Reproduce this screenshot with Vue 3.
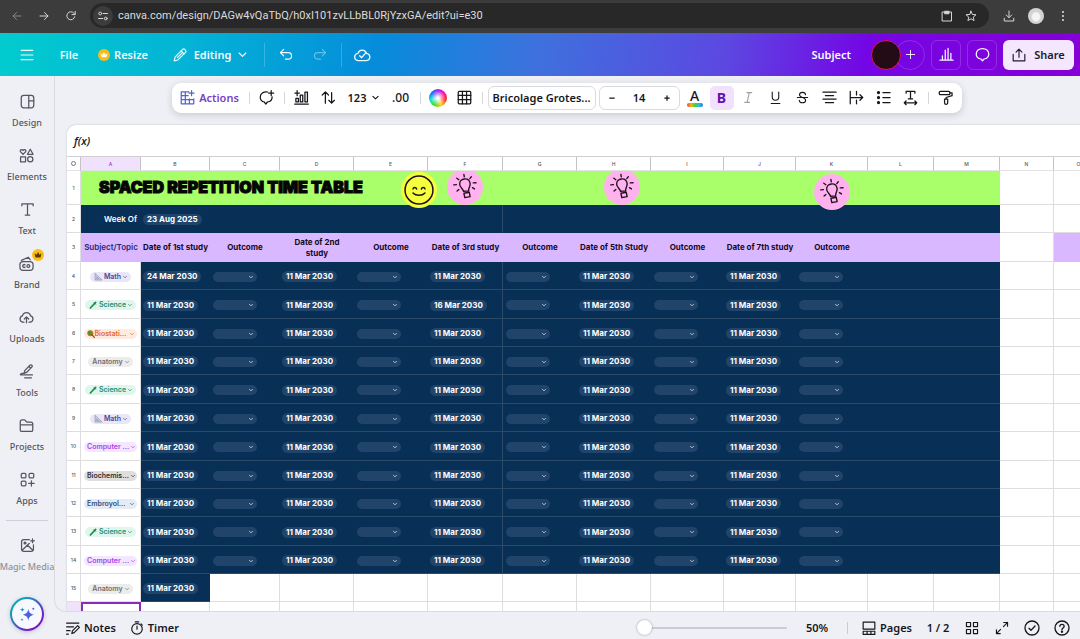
<script setup>
import { h, ref } from 'vue'

const icons = {
  back: '<path d="M20 12H4M11 5l-7 7 7 7"/>',
  forward: '<path d="M4 12h16M13 5l7 7-7 7"/>',
  reload: '<path d="M19.5 13.5A8 8 0 1 1 17.8 6.4L20 8.6"/><path d="M20.4 2.8v6.4H14"/>',
  tune: '<circle cx="6.5" cy="7" r="2.8"/><path d="M12.5 7H21M3 17h8.5"/><circle cx="17.5" cy="17" r="2.8"/>',
  clipboard: '<path d="M3 4h18v18H3z"/><path d="M8 2.500h8v5H8z" fill="currentColor"/>',
  star: '<path d="M12 2.300l2.800 6.600 7.200.6-5.500 4.700 1.700 7L12 17.500l-6.200 3.700 1.700-7L2 9.500l7.200-.6z"/>',
  download: '<path d="M12 2v13M6.500 10l5.500 5.500 5.500-5.500M2.500 16.500V22h19v-5.500"/>',
  dots: '<g fill="currentColor" stroke="none"><circle cx="12" cy="4" r="2.200"/><circle cx="12" cy="12" r="2.200"/><circle cx="12" cy="20" r="2.200"/></g>',
  menu: '<path d="M2 4h20M2 12h20M2 20h20"/>',
  crownCoin: '<circle cx="12" cy="12" r="12" fill="#fdbc15" stroke="none"/><path d="M5.500 8.500l3.500 3 3-5 3 5 3.500-3-1.500 8H7z" fill="#fff" stroke="none"/>',
  crownDark: '<circle cx="12" cy="12" r="12" fill="#fdbc15" stroke="none"/><path d="M5 8.500l4 3 3-5.500 3 5.500 4-3-2 8.500H7z" fill="#5b3a05" stroke="none"/>',
  pencil: '<path d="M2 22l1.500-6.500L16.500 2.500c1-1 2.500-1 3.500 0l1.500 1.500c1 1 1 2.500 0 3.500L8.500 20.500z"/><path d="M14 5l5 5M16.500 7.500l-9 9"/>',
  chevron: '<path d="M3 8l9 9 9-9"/>',
  undo: '<path d="M8 2.500L2.500 8 8 13.500"/><path d="M2.500 8H16a5.500 5.500 0 0 1 0 11h-5"/>',
  redo: '<path d="M16 2.500L21.500 8 16 13.500"/><path d="M21.500 8H8a5.500 5.500 0 0 0 0 11h5"/>',
  cloud: '<path d="M7 20.500a5.500 5.500 0 0 1-1-11 6.500 6.500 0 0 1 12.500 0A5.500 5.500 0 0 1 18 20.500z"/><path d="M8.500 13l3 3 6.500-7.500"/>',
  plus: '<path d="M12 3v18M3 12h18"/>',
  minus: '<path d="M3 12h18"/>',
  bars: '<path d="M1.500 21h21M5.500 21v-7M10 21V5M14.500 21V2M19 21V10"/>',
  bubble: '<path d="M12 2.500c5.800 0 10 3.700 10 8.500 0 4.500-3.500 7.500-7.500 8.200L12 22l-2.500-2.800C5.500 18.500 2 15.500 2 11c0-4.800 4.200-8.500 10-8.500z"/>',
  share: '<path d="M12 16V2M7 7l5-5 5 5M2 11v11h20V11"/>',
  design: '<rect x="2" y="2" width="20" height="20" rx="4"/><path d="M14 2v20M14 11h8"/>',
  elements: '<path d="M6.500 10L2.500 6.200C.6 3.600 4.800 1 6.500 4c1.700-3 5.900-.4 4 2.200zM18 2l4.500 8h-9zM2.500 14h8v8h-8z"/><circle cx="18" cy="18" r="4.200"/>',
  text: '<path d="M3 6V3h18v3M12 3v18M8.500 21h7"/>',
  brand: '<rect x="1.500" y="9" width="21" height="14" rx="5"/><path d="M4 7l11-5 3 4M9.800 14.300a2.300 2.300 0 1 0 0 3.400"/><circle cx="15" cy="16" r="2.300"/>',
  uploads: '<path d="M8 19.500H6.500a5.200 5.200 0 0 1-1-10.200 6.700 6.700 0 0 1 13 0 5.200 5.200 0 0 1-1 10.200H16M12 20.500V11M8.500 14.500L12 11l3.500 3.500"/>',
  tools: '<path d="M8 15l1.200-4.500L17.500 2c1-1 2-1 3 0s1 2 0 3L12 13.500zM16 4l2.500 2.500M8.500 14.800C3 14.500 1 17 3 17.500h18.500M9 22h11"/>',
  folder: '<path d="M2 19V6c0-2 1-3 3-3h4l3.500 3.500H19c2 0 3 1 3 3V19c0 1.500-1 2.500-2.500 2.500h-15C3 21.500 2 20.500 2 19zM2 11h20"/>',
  apps: '<rect x="2" y="2" width="7.500" height="7.500" rx="2"/><rect x="14.500" y="2" width="7.500" height="7.500" rx="2"/><rect x="2" y="14.500" width="7.500" height="7.500" rx="2"/><path d="M18.300 14v8.500M14 18.300h8.500"/>',
  media: '<path d="M15 2.500H6A3.500 3.500 0 0 0 2.500 6v12A3.500 3.500 0 0 0 6 21.500h12a3.500 3.500 0 0 0 3.500-3.500v-7M3 20L15 8.500M12 11.500l9 8.500M20 1.500v6M17 4.500h6"/><circle cx="8" cy="8" r="1.500" fill="currentColor"/>',
  actions: '<path d="M14 3H2v19h20v-8M2 9h11M2 15.500h20M8.500 3v19M15 14v8M18.500 1v8M14.500 5h8"/>',
  commentPlus: '<path d="M14 3.200C7 2 2 6 2 11c0 4.500 3 7.500 6.500 8.200L11 22.500l2.500-3.300c4.500-.7 7.500-3.700 7.500-8.200M19.500 1v8M15.500 5h8"/>',
  chart: '<path d="M1 22.500h22M3 13.500h4V19H3zM10 8h4v11h-4zM17.500 3.500h4V19h-4zM5 1v8M1.500 5h7"/>',
  sort: '<path d="M7 21V3M2 8l5-5 5 5M17 4v17M12.500 16.500L17 21l4.500-4.500"/>',
  grid: '<rect x="2" y="2" width="20" height="20" rx="1.500"/><path d="M8.700 2v20M15.300 2v20M2 8.700h20M2 15.300h20"/>',
  italic: '<path d="M9 3h9M5 21h9M13.500 3l-4 18"/>',
  underline: '<path d="M6 2v9a6 6 0 0 0 12 0V2M4 23h16"/>',
  strike: '<path d="M17.500 7c0-3-2.200-4.500-5.500-4.500S6.500 4 6.500 7s2.500 4 5.500 5 5.800 2 5.800 5-2.500 4.800-5.800 4.800S6 20 6 17M2.500 12h19"/>',
  align: '<path d="M1.500 3.500h21M5.500 9h13M1.500 14.500h21M5.500 20h13"/>',
  overflow: '<path d="M2 2v20M12 2v6M12 16v6M2 12h20M17.500 7.500L22 12l-4.500 4.500"/>',
  list: '<path d="M11 4h11.500M11 12h11.500M11 20h11.500"/><g fill="currentColor"><circle cx="4" cy="4" r="1.600"/><circle cx="4" cy="12" r="1.600"/><circle cx="4" cy="20" r="1.600"/></g>',
  spacing: '<path d="M5 5V2h14v3M12 2v12M8.500 14h7M2 20.500h20M5 17.500l-3 3 3 3M19 17.500l3 3-3 3"/>',
  roller: '<rect x="2" y="2" width="17" height="5.500" rx="2"/><path d="M19 4.500h3.500V9L13 12v2.500M10.500 14.500h5v6a2.500 2.500 0 0 1-5 0z"/>',
  notes: '<path d="M1 3.500h21M1 10h12M1 16.500h6M10 21.500l1-4.500L20 8l3 3-9 9zM1 22.500h3"/>',
  timer: '<circle cx="12" cy="13.500" r="9"/><path d="M9 1.500h6M12 8.500V14M19 5l2 2"/>',
  pages: '<path d="M2 2h20v12H2zM2 17.500h20V23H2zM8.700 17.500V23M15.300 17.500V23"/>',
  tiles: '<path d="M2.500 2.500h7v7h-7zM14.500 2.500h7v7h-7zM2.500 14.500h7v7h-7zM14.500 14.500h7v7h-7z"/>',
  expand: '<path d="M14.500 9.500l7-7M15 2.500h6.500V9M9.500 14.500l-7 7M9 21.500H2.500V15"/>',
  check: '<circle cx="12" cy="12" r="10.500"/><path d="M7.500 12.500l3 3 6-6.500"/>',
  help: '<circle cx="12" cy="12" r="10.500"/><path d="M8.800 9.500c0-4 6.400-4 6.400 0 0 2.500-3.200 2.500-3.200 5"/><circle cx="12" cy="17.500" r=".8" fill="currentColor"/>',
  sparkle: '<g stroke="none" fill="#4a63dc"><path d="M14 4c1 6 3 8 9 9-6 1-8 3-9 9-1-6-3-8-9-9 6-1 8-3 9-9z"/><path d="M5 2c.4 2.400 1.200 3.200 3.500 3.500C6.200 6 5.400 6.700 5 9c-.4-2.300-1.200-3-3.500-3.500C3.800 5.200 4.600 4.400 5 2z" fill="#129bc9"/><circle cx="21.500" cy="4" r="1.500"/><circle cx="4.500" cy="20.500" r="1.400" fill="#129bc9"/></g>',
  ruler: '<path d="M3 2v19h20z" fill="#c9cde0" stroke="#8b90ad"/><path d="M8 13v4h5z" fill="#fff" stroke="#8b90ad"/>',
  tube: '<path d="M4 21L20 4" stroke="#149447" stroke-width="5"/><path d="M15 5l5 5" stroke="#0e6b38"/>',
  palette: '<circle cx="10" cy="10" r="9" fill="#c8742c" stroke="none"/><circle cx="8" cy="8" r="6" fill="#3f9a35" stroke="none"/><path d="M14 13l8 9" stroke="#a3410e" stroke-width="4"/>',
  smile: '<circle cx="12" cy="12" r="9.300"/><path d="M8 11.300c.3-1.300 2-1.300 2.400 0M13.600 11.300c.4-1.300 2.100-1.300 2.400 0M8 14c1.800 2.100 6.200 2.100 8 0"/>',
  bulb: '<g transform="rotate(-4 12 12)"><path d="M10.500 15.500C10 13 7.500 12.300 7.600 9.300c.1-5.500 8.500-5.800 9 0 .2 2.800-2 3.700-1.700 6.200zM10.700 17.300l4.600-.6.500 3.800-4.600.6zM11.800 1.200l.2 2M5.500 4l1.700 1.400M2.500 9.500h2.300M5 15l1.600-1.300M18 3.600l-1.400 1.500M19.300 9h2.400M18.300 13l1.700 1.200"/></g>'
}

const Icon = (props) =>
  h('svg', { class: 'icon', viewBox: '0 0 24 24', 'aria-hidden': 'true', innerHTML: icons[props.name] })
Icon.props = ['name']

const url = ref('canva.com/design/DAGw4vQaTbQ/h0xI101zvLLbBL0RjYzxGA/edit?ui=e30')
const formula = ref('')
const fontSize = ref('14')
const zoom = ref(0)

const nav = [
  { icon: 'design', label: 'Design' },
  { icon: 'elements', label: 'Elements' },
  { icon: 'text', label: 'Text' },
  { icon: 'brand', label: 'Brand', pro: true },
  { icon: 'uploads', label: 'Uploads' },
  { icon: 'tools', label: 'Tools' },
  { icon: 'folder', label: 'Projects' },
  { icon: 'apps', label: 'Apps' }
]
const formats = [
  ['italic', 'Italic'], ['underline', 'Underline'], ['strike', 'Strikethrough'], ['align', 'Alignment'],
  ['overflow', 'Text overflow'], ['list', 'List'], ['spacing', 'Spacing']
]
const letters = 'ABCDEFGHIJKLMNO'.split('')
const headings = [
  'Date of 1st study', 'Outcome', 'Date of 2nd study', 'Outcome', 'Date of 3rd study', 'Outcome',
  'Date of 5th Study', 'Outcome', 'Date of 7th study', 'Outcome', '', ''
]
const math = { text: 'Math', icon: 'ruler', tone: 'indigo' }
const science = { text: 'Science', icon: 'tube', tone: 'green' }
const anatomy = { text: 'Anatomy', tone: 'gray' }
const computer = { text: 'Computer ...', tone: 'violet', wide: true }
const subjects = [
  math, science, { text: 'Biostati...', icon: 'palette', tone: 'orange', wide: true }, anatomy, science, math,
  computer, { text: 'Biochemis...', tone: 'dark', wide: true }, { text: 'Embroyol...', tone: 'steel', wide: true },
  science, computer
]
const rows = subjects.map((subject, i) => ({
  n: i + 4,
  subject,
  dates: [0, 1, 2, 3, 4].map((d) =>
    i === 0 && d === 0 ? '24 Mar 2030' : i === 1 && d === 2 ? '16 Mar 2030' : '11 Mar 2030')
}))
</script>

<template>
  <div class="page">
    <header class="browser">
      <div class="history">
        <button class="bare dim" aria-label="Back"><Icon name="back" /></button>
        <button class="bare" aria-label="Forward"><Icon name="forward" /></button>
        <button class="bare" aria-label="Reload"><Icon name="reload" /></button>
      </div>
      <div class="address">
        <button class="bare site" aria-label="Site information"><Icon name="tune" /></button>
        <input v-model="url" class="url" type="text" aria-label="Address" />
        <button class="bare" aria-label="Clipboard"><Icon name="clipboard" /></button>
        <button class="bare" aria-label="Bookmark"><Icon name="star" /></button>
      </div>
      <div class="extras">
        <button class="bare" aria-label="Downloads"><Icon name="download" /></button>
        <button class="bare profile" aria-label="Profile"></button>
        <button class="bare" aria-label="More"><Icon name="dots" /></button>
      </div>
    </header>

    <div class="topbar">
      <button class="bare hamburger" aria-label="Menu"><Icon name="menu" /></button>
      <button class="bare file">File</button>
      <button class="bare resize"><Icon name="crownCoin" />Resize</button>
      <button class="bare editing" aria-haspopup="menu"><Icon name="pencil" />Editing<Icon name="chevron" class="chev" /></button>
      <span class="rule"></span>
      <button class="bare step" aria-label="Undo"><Icon name="undo" /></button>
      <button class="bare step faded" aria-label="Redo"><Icon name="redo" /></button>
      <span class="rule"></span>
      <button class="bare saved" aria-label="Saved"><Icon name="cloud" /></button>
      <span class="spacer"></span>
      <button class="bare doc-title">Subject</button>
      <div class="people">
        <button class="bare avatar" aria-label="Account"></button>
        <button class="bare add" aria-label="Add people"><Icon name="plus" /></button>
      </div>
      <button class="bare boxed" aria-label="Analytics"><Icon name="bars" /></button>
      <button class="bare boxed" aria-label="Comments"><Icon name="bubble" /></button>
      <button class="bare share"><Icon name="share" />Share</button>
    </div>

    <div class="body">
      <nav class="side">
        <a v-for="item in nav" :key="item.label" href="#" class="side-item">
          <span class="side-icon"><Icon :name="item.icon" /><Icon v-if="item.pro" name="crownDark" class="pro" /></span>
          {{ item.label }}
        </a>
        <hr class="side-rule" />
        <a href="#" class="side-item media"><span class="side-icon"><Icon name="media" /></span>Magic Media</a>
        <button class="bare magic" aria-label="Assistant"><Icon name="sparkle" /></button>
      </nav>

      <div class="work">
        <main class="canvas">
          <div class="tools">
            <button class="bare actions"><Icon name="actions" />Actions</button>
            <span class="split"></span>
            <button class="bare tool" aria-label="Add comment"><Icon name="commentPlus" /></button>
            <span class="split"></span>
            <button class="bare tool" aria-label="Chart"><Icon name="chart" /></button>
            <button class="bare tool" aria-label="Sort"><Icon name="sort" /></button>
            <button class="bare number" aria-haspopup="menu">123<Icon name="chevron" /></button>
            <button class="bare decimals">.00</button>
            <span class="split"></span>
            <button class="bare tool" aria-label="Color"><span class="wheel"></span></button>
            <button class="bare tool" aria-label="Borders"><Icon name="grid" /></button>
            <span class="split"></span>
            <button class="bare family">Bricolage Grotes...</button>
            <div class="size">
              <button class="bare" aria-label="Smaller"><Icon name="minus" /></button>
              <input v-model="fontSize" type="text" aria-label="Font size" />
              <button class="bare" aria-label="Larger"><Icon name="plus" /></button>
            </div>
            <button class="bare tool color-text" aria-label="Text color"><span>A</span><i></i></button>
            <button class="bare tool bold">B</button>
            <button v-for="f in formats" :key="f[0]" class="bare tool" :class="f[0]" :aria-label="f[1]"><Icon :name="f[0]" /></button>
            <span class="split"></span>
            <button class="bare tool" aria-label="Copy style"><Icon name="roller" /></button>
          </div>

          <section class="sheet">
            <div class="formula">
              <label for="fx">f(x)</label>
              <input id="fx" v-model="formula" type="text" />
            </div>
            <table>
              <colgroup>
                <col class="c-num" /><col class="c-a" /><col class="c-69" /><col class="c-70" /><col class="c-74" />
                <col class="c-74" /><col class="c-75" /><col class="c-74" /><col class="c-74" /><col class="c-73" />
                <col class="c-72" /><col class="c-72" /><col class="c-66" /><col class="c-66" /><col class="c-54" /><col class="c-50" />
              </colgroup>
              <thead>
                <tr class="letters">
                  <th><span class="ring"></span></th>
                  <th v-for="l in letters" :key="l" :class="{ picked: l === 'A' }">{{ l }}</th>
                </tr>
              </thead>
              <tbody>
                <tr class="r-title">
                  <th>1</th>
                  <td colspan="13" class="title">
                    SPACED REPETITION TIME TABLE
                    <div class="stickers">
                      <span class="sticker smile"><Icon name="smile" /></span>
                      <span class="sticker bulb one"><Icon name="bulb" /></span>
                      <span class="sticker bulb two"><Icon name="bulb" /></span>
                      <span class="sticker bulb three"><Icon name="bulb" /></span>
                    </div>
                  </td>
                  <td></td><td></td>
                </tr>
                <tr class="r-28">
                  <th>2</th>
                  <td class="navy week">Week Of</td>
                  <td colspan="5" class="navy seam"><button class="bare date">23 Aug 2025</button></td>
                  <td colspan="7" class="navy"></td>
                  <td></td><td></td>
                </tr>
                <tr class="r-29">
                  <th>3</th>
                  <td class="lilac topic">Subject/Topic</td>
                  <td v-for="(t, i) in headings" :key="i" class="lilac" :class="{ wrap: i === 2 }">{{ t }}</td>
                  <td></td><td class="lilac"></td>
                </tr>
                <tr v-for="r in rows" :key="r.n" :class="[5, 8, 10, 13].includes(r.n) ? 'r-29' : 'r-28'">
                  <th>{{ r.n }}</th>
                  <td class="subject">
                    <span class="chip" :class="[r.subject.tone, { wide: r.subject.wide }]">
                      <Icon v-if="r.subject.icon" :name="r.subject.icon" />
                      <select :aria-label="'Subject, row ' + r.n"><option>{{ r.subject.text }}</option></select>
                      <Icon name="chevron" class="chip-chev" />
                    </span>
                  </td>
                  <template v-for="(d, i) in r.dates" :key="i">
                    <td class="navy" :class="{ seam: i === 2 }"><button class="bare date">{{ d }}</button></td>
                    <td class="navy">
                      <span class="outcome">
                        <select :aria-label="'Outcome, row ' + r.n"><option></option></select>
                        <Icon name="chevron" class="chip-chev" />
                      </span>
                    </td>
                  </template>
                  <td class="navy"></td><td class="navy"></td>
                  <td></td><td></td>
                </tr>
                <tr class="r-28">
                  <th>15</th>
                  <td class="subject">
                    <span class="chip gray">
                      <select aria-label="Subject, row 15"><option>{{ anatomy.text }}</option></select>
                      <Icon name="chevron" class="chip-chev" />
                    </span>
                  </td>
                  <td class="navy"><button class="bare date">11 Mar 2030</button></td>
                  <td v-for="n in 13" :key="n"></td>
                </tr>
                <tr class="r-28">
                  <th class="picked"></th>
                  <td class="active"></td>
                  <td v-for="n in 14" :key="n"></td>
                </tr>
              </tbody>
            </table>
          </section>
        </main>

        <footer class="status">
          <button class="bare notes"><Icon name="notes" />Notes</button>
          <button class="bare notes"><Icon name="timer" />Timer</button>
          <span class="spacer"></span>
          <input v-model="zoom" class="zoom" type="range" min="0" max="100" aria-label="Zoom" />
          <button class="bare percent">50%</button>
          <span class="split"></span>
          <button class="bare pages"><Icon name="pages" />Pages</button>
          <span class="count">1 / 2</span>
          <button class="bare end" aria-label="Grid view"><Icon name="tiles" class="small" /></button>
          <button class="bare end" aria-label="Full screen"><Icon name="expand" class="small" /></button>
          <button class="bare end" aria-label="Checks"><Icon name="check" /></button>
          <button class="bare end" aria-label="Help"><Icon name="help" /></button>
        </footer>
      </div>
    </div>
  </div>
</template>

<style>
body {
  overflow: hidden;
}
</style>

<style scoped>
.page {
  display: flex;
  flex-direction: column;
  height: 100vh;
  overflow: hidden;
  background: #eff0f5;
  color: #15171c;
  font-family: "Noto Sans", sans-serif;
  font-size: 11px;
  font-weight: 600;
}
.page * {
  box-sizing: border-box;
}
.icon {
  display: block;
  flex: none;
  width: 14px;
  height: 14px;
  fill: none;
  stroke: currentColor;
  stroke-width: 2;
  stroke-linecap: round;
  stroke-linejoin: round;
  overflow: visible;
}
.bare {
  display: flex;
  align-items: center;
  justify-content: center;
  padding: 0;
  border: 0;
  background: none;
  color: inherit;
  font: inherit;
}
input {
  min-width: 0;
  padding: 0;
  border: 0;
  outline: 0;
  background: none;
  color: inherit;
  font: inherit;
}
.spacer {
  flex: 1;
}

/* browser bar */
.browser {
  display: flex;
  flex: none;
  align-items: center;
  height: 33px;
  padding: 0 9px 2px;
  background: #3c3c3c;
  color: #d6d6d6;
}
.browser .icon {
  width: 12px;
  height: 12px;
}
.history {
  display: flex;
  gap: 11px;
  width: 81px;
}
.history .bare {
  width: 16px;
}
.history .dim {
  color: #858585;
}
.address {
  display: flex;
  flex: 1;
  align-items: center;
  gap: 12px;
  height: 25px;
  padding: 0 12px 0 3px;
  border-radius: 13px;
  background: #282828;
}
.site {
  width: 20px;
  height: 20px;
  border-radius: 50%;
  background: #3c3c3c;
}
.url {
  flex: 1;
  margin-left: -7px;
  color: #dcdcdc;
  font-family: Roboto, sans-serif;
  font-size: 11px;
  font-weight: 400;
}
.extras {
  display: flex;
  align-items: center;
  gap: 11px;
  padding-left: 12px;
}
.extras .bare {
  width: 16px;
}
.extras .profile {
  height: 16px;
  border-radius: 50%;
  background: radial-gradient(ellipse at 50% 55%, #f4f4f4 30%, #d2d2d2 45%);
}

/* editor top bar */
.topbar {
  display: flex;
  flex: none;
  align-items: center;
  gap: 6px;
  height: 43px;
  padding: 0 6px 0 12px;
  background: linear-gradient(100deg, #02cccf 0%, #04b4d5 17%, #058cdb 35%, #3f70dd 50%, #5c48e1 67%, #7406e5 80%, #8500d5 100%);
  color: #f4fbff;
}
.hamburger {
  width: 30px;
}
.file {
  width: 42px;
}
.resize {
  gap: 4px;
  width: 54px;
}
.resize .icon {
  width: 12px;
  height: 12px;
}
.editing {
  gap: 7px;
  width: 86px;
  margin: 0 3px 0 11px;
}
.editing .chev {
  width: 9px;
  height: 9px;
  stroke-width: 3;
}
.rule {
  width: 1px;
  height: 24px;
  margin: 0 2px;
  background: rgba(255, 255, 255, 0.2);
}
.step {
  width: 26px;
}
.step + .step {
  margin-left: 2px;
}
.faded {
  opacity: 0.4;
}
.saved {
  width: 24px;
}
.saved .icon {
  width: 16px;
  height: 16px;
}
.doc-title {
  margin-right: 14px;
}
.people {
  display: flex;
}
.avatar {
  z-index: 1;
  width: 30px;
  height: 30px;
  border: 1px solid #dd1550;
  border-radius: 50%;
  background: #240c16;
}
.add {
  width: 30px;
  height: 30px;
  margin-left: -6px;
  border: 1px solid rgba(255, 255, 255, 0.16);
  border-radius: 50%;
}
.add .icon {
  width: 11px;
  height: 11px;
}
.boxed {
  width: 30px;
  height: 30px;
  border: 1px solid rgba(255, 255, 255, 0.16);
  border-radius: 6px;
}
.boxed .icon {
  width: 15px;
  height: 15px;
}
.share {
  gap: 8px;
  width: 71px;
  height: 30px;
  border-radius: 6px;
  background: #f3e6fd;
  color: #201a2b;
}

/* side navigation */
.body {
  display: flex;
  flex: 1;
  min-height: 0;
}
.side {
  display: flex;
  flex: none;
  flex-direction: column;
  align-items: center;
  width: 54px;
  padding-top: 12px;
  color: #53565e;
  font-size: 9px;
}
.side-item {
  display: flex;
  flex: none;
  flex-direction: column;
  align-items: center;
  gap: 7px;
  height: 54px;
  padding-top: 6px;
  color: inherit;
  font-weight: 500;
  line-height: 14px;
  text-decoration: none;
  white-space: nowrap;
}
.side-icon {
  position: relative;
}
.side-icon .icon {
  width: 15px;
  height: 15px;
}
.side-icon .pro {
  position: absolute;
  top: -7px;
  right: -10px;
  width: 12px;
  height: 12px;
}
.side-rule {
  flex: none;
  width: 42px;
  height: 1px;
  margin: 0 0 11px;
  border: 0;
  background: #cfd1d8;
}
.media {
  color: #8d9098;
}
.media .icon {
  color: #53565e;
}
.magic {
  flex: none;
  width: 34px;
  height: 34px;
  margin-top: 11px;
  border: 2px solid transparent;
  border-radius: 50%;
  background: linear-gradient(#f8f9ff, #f8f9ff) padding-box, linear-gradient(135deg, #06a5b5 20%, #7a16c4 80%) border-box;
  box-shadow: 0 1px 4px rgba(60, 50, 120, 0.25);
}
.magic .icon {
  width: 16px;
  height: 16px;
}

/* canvas and floating toolbar */
.work {
  display: flex;
  flex: 1;
  flex-direction: column;
  min-width: 0;
}
.canvas {
  display: flex;
  flex: 1;
  flex-direction: column;
  min-height: 0;
  overflow: hidden;
  border: 1px solid #d9dbe1;
  border-width: 0 0 1px 1px;
  border-bottom-left-radius: 12px;
}
.tools {
  display: flex;
  flex: none;
  align-items: center;
  align-self: center;
  gap: 3px;
  height: 30px;
  margin: 7px 2px 12px 0;
  padding: 0 4px 1px;
  border-radius: 9px;
  background: #fff;
  box-shadow: 0 2px 7px rgba(40, 45, 70, 0.2);
}
.actions {
  gap: 4px;
  width: 68px;
  color: #7a3fc6;
}
.actions .icon {
  width: 15px;
  height: 15px;
  color: #5566cf;
}
.split {
  flex: none;
  width: 1px;
  height: 12px;
  margin: 0 2px;
  background: #d5d7dd;
}
.tool {
  width: 24px;
  height: 24px;
}
.tool .icon {
  width: 15px;
  height: 15px;
}
.number {
  gap: 6px;
  width: 40px;
}
.number .icon {
  width: 7px;
  height: 7px;
  stroke-width: 4;
}
.decimals {
  width: 28px;
  font-size: 12px;
  font-weight: 500;
}
.wheel {
  width: 18px;
  height: 18px;
  border-radius: 50%;
  background: radial-gradient(circle, #fff 5%, transparent 60%), conic-gradient(#a020ff, #ff10a0, #ff3020, #ffd020, #40e020, #10e0d0, #1070ff, #a020ff);
}
.family {
  width: 108px;
  height: 24px;
  border: 1px solid #d9dbe2;
  border-radius: 6px;
}
.size {
  display: flex;
  align-items: center;
  width: 81px;
  height: 24px;
  border: 1px solid #d9dbe2;
  border-radius: 6px;
}
.size .bare {
  width: 24px;
}
.size .icon {
  width: 6px;
  height: 6px;
  stroke-width: 5;
}
.size input {
  flex: 1;
  text-align: center;
}
.color-text {
  flex-direction: column;
  font-size: 14px;
  font-weight: 500;
  line-height: 14px;
}
.color-text i {
  width: 16px;
  height: 4px;
  border-radius: 2px;
  background: linear-gradient(90deg, #f0443a, #f7b21b, #45cf3c, #23c6de, #3a6bf0);
}
.bold {
  border-radius: 5px;
  background: #f1e1fc;
  color: #6410b4;
  font-size: 14px;
  font-weight: 700;
}
.italic {
  color: #9da0a7;
}
.italic .icon,
.underline .icon,
.strike .icon {
  width: 13px;
  height: 13px;
}

/* spreadsheet */
.sheet {
  flex: 1;
  min-height: 0;
  margin-left: 12px;
  overflow: hidden;
  border-top-left-radius: 9px;
  background: #fff;
  box-shadow: 0 0 2px rgba(40, 45, 70, 0.25);
}
.formula {
  display: flex;
  align-items: center;
  height: 32px;
  padding: 0 7px;
  border-bottom: 1px solid #d0d0d3;
  font-family: "Open Sans", sans-serif;
  font-size: 11px;
  font-style: italic;
}
.formula input {
  flex: 1;
}
table {
  width: max-content;
  border-spacing: 0;
  table-layout: fixed;
  font-family: Inter, sans-serif;
  font-size: 8px;
  line-height: 11px;
}
.c-num { width: 14px; }
.c-a { width: 60px; }
.c-50 { width: 50px; }
.c-54 { width: 54px; }
.c-66 { width: 66px; }
.c-69 { width: 69px; }
.c-70 { width: 70px; }
.c-72 { width: 72px; }
.c-73 { width: 73px; }
.c-74 { width: 74px; }
.c-75 { width: 75px; }
th,
td {
  padding: 0;
  border: 1px solid #dedee0;
  border-width: 0 1px 1px 0;
  text-align: center;
  vertical-align: middle;
  white-space: nowrap;
}
th {
  color: #55575c;
  font-size: 5px;
  font-weight: 500;
  line-height: 6px;
}
.letters th {
  height: 14px;
  border-color: #c4c4c8;
  border-bottom-color: #e3e3e6;
}
.picked {
  background: #f0e2fc;
}
.letters .picked {
  color: #9a3fc9;
}
.ring {
  display: block;
  width: 5px;
  height: 5px;
  margin: 0 auto;
  border: 1px solid #77797f;
  border-radius: 50%;
}
.r-title > * { height: 34px; }
.r-28 > * { height: 28px; }
.r-29 > * { height: 29px; }
.title {
  position: relative;
  padding: 0 0 2px 18px;
  border-width: 0;
  background: #a9ff6a;
  color: #050505;
  font-size: 16px;
  font-weight: 900;
  line-height: 18px;
  text-align: left;
  -webkit-text-stroke: 1px #050505;
}
.stickers {
  position: absolute;
  inset: 0 0 -8px;
  overflow: hidden;
}
.sticker {
  position: absolute;
  display: flex;
  align-items: center;
  justify-content: center;
  width: 36px;
  height: 36px;
  border-radius: 50%;
  background: #ffb2ee;
}
.sticker .icon {
  width: 28px;
  height: 28px;
  stroke: #251022;
  stroke-width: 1.2;
}
.sticker.smile {
  top: 1px;
  left: 320px;
  background: #f4ff3d;
}
.smile .icon {
  width: 36px;
  height: 36px;
  stroke-width: 1;
}
.one { top: -2px; left: 366px; }
.two { top: -2px; left: 523px; }
.three { top: 3px; left: 733px; }
.navy {
  padding-top: 2px;
  border-color: #2b4a68;
  border-right-width: 0;
  background: #082f55;
  color: #fff;
  text-align: left;
}
.subject {
  padding-top: 2px;
}
.seam {
  border-right-width: 1px;
}
.r-28:nth-child(2) .navy {
  border-bottom-color: #082f55;
}
.week {
  padding-right: 4px;
  text-align: right;
}
.lilac {
  border-width: 0;
  background: #d9b8ff;
  color: #140a24;
  font-weight: 700;
}
.wrap {
  padding: 0 12px;
  white-space: normal;
}
.topic {
  color: #2c2577;
  font-weight: 600;
}
.date {
  height: 11px;
  margin-left: 2px;
  padding: 0 4px;
  border-radius: 6px;
  background: #20446a;
  color: #fff;
  font-weight: 700;
}
.outcome {
  display: flex;
  align-items: center;
  width: 44px;
  height: 10px;
  margin-left: 3px;
  padding-right: 4px;
  border-radius: 5px;
  background: #20446a;
}
select {
  padding: 0;
  border: 0;
  outline: 0;
  appearance: none;
  background: none;
  color: inherit;
  font: inherit;
  line-height: 10px;
}
.outcome select {
  flex: 1;
  min-width: 0;
  height: 10px;
}
.chip-chev {
  width: 4px;
  height: 4px;
  stroke-width: 4;
}
.chip {
  display: inline-flex;
  align-items: center;
  gap: 2px;
  height: 10px;
  padding: 0 4px;
  border-radius: 5px;
  font-size: 7px;
  font-weight: 600;
  vertical-align: middle;
}
.chip .icon:first-child {
  width: 8px;
  height: 8px;
}
.chip select {
  height: 10px;
  field-sizing: content;
}
.chip.wide {
  justify-content: space-between;
  width: 53px;
  padding: 0 3px;
}
.indigo { background: #e9e6f8; color: #4d4496; }
.green { background: #e0f6ec; color: #1d8f74; }
.orange { background: #ffeae0; color: #e3692c; }
.orange .icon:first-child { margin-right: -4px; }
.gray { background: #ececec; color: #6f6f6f; }
.violet { background: #f4e6ff; color: #a546e8; }
.dark { background: #dedede; color: #2f2f2f; }
.steel { background: #e4ebf5; color: #32507e; }
.active {
  border: 2px solid #8a2bbd;
}

/* status bar */
.status {
  display: flex;
  flex: none;
  align-items: center;
  gap: 14px;
  height: 27px;
  padding: 4px 10px 0 12px;
}
.notes,
.pages {
  gap: 4px;
}
.zoom {
  width: 150px;
  height: 16px;
  margin: 0;
  appearance: none;
}
.zoom::-webkit-slider-runnable-track {
  height: 2px;
  border-radius: 1px;
  background: #c9ccd4;
}
.zoom::-webkit-slider-thumb {
  width: 15px;
  height: 15px;
  margin-top: -7px;
  border-radius: 50%;
  appearance: none;
  background: #fff;
  box-shadow: 0 0 2px rgba(30, 35, 60, 0.5);
}
.percent {
  width: 32px;
}
.status .split {
  margin: 0;
  background: #c9ccd4;
}
.count {
  width: 24px;
  text-align: center;
  white-space: nowrap;
}
.end .icon {
  width: 16px;
  height: 16px;
  stroke-width: 2;
}
.end .small {
  width: 14px;
  height: 14px;
  margin: 0 1px;
}
</style>
